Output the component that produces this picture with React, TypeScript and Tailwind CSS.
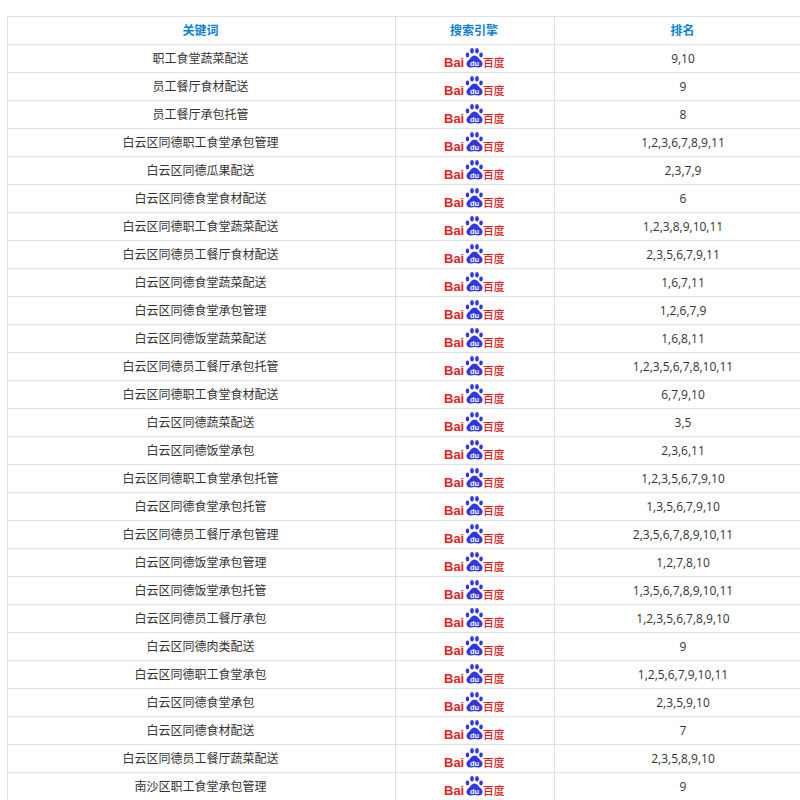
import React from 'react';

const rows: [string, string][] = [
  ['职工食堂蔬菜配送', '9,10'],
  ['员工餐厅食材配送', '9'],
  ['员工餐厅承包托管', '8'],
  ['白云区同德职工食堂承包管理', '1,2,3,6,7,8,9,11'],
  ['白云区同德瓜果配送', '2,3,7,9'],
  ['白云区同德食堂食材配送', '6'],
  ['白云区同德职工食堂蔬菜配送', '1,2,3,8,9,10,11'],
  ['白云区同德员工餐厅食材配送', '2,3,5,6,7,9,11'],
  ['白云区同德食堂蔬菜配送', '1,6,7,11'],
  ['白云区同德食堂承包管理', '1,2,6,7,9'],
  ['白云区同德饭堂蔬菜配送', '1,6,8,11'],
  ['白云区同德员工餐厅承包托管', '1,2,3,5,6,7,8,10,11'],
  ['白云区同德职工食堂食材配送', '6,7,9,10'],
  ['白云区同德蔬菜配送', '3,5'],
  ['白云区同德饭堂承包', '2,3,6,11'],
  ['白云区同德职工食堂承包托管', '1,2,3,5,6,7,9,10'],
  ['白云区同德食堂承包托管', '1,3,5,6,7,9,10'],
  ['白云区同德员工餐厅承包管理', '2,3,5,6,7,8,9,10,11'],
  ['白云区同德饭堂承包管理', '1,2,7,8,10'],
  ['白云区同德饭堂承包托管', '1,3,5,6,7,8,9,10,11'],
  ['白云区同德员工餐厅承包', '1,2,3,5,6,7,8,9,10'],
  ['白云区同德肉类配送', '9'],
  ['白云区同德职工食堂承包', '1,2,5,6,7,9,10,11'],
  ['白云区同德食堂承包', '2,3,5,9,10'],
  ['白云区同德食材配送', '7'],
  ['白云区同德员工餐厅蔬菜配送', '2,3,5,8,9,10'],
  ['南沙区职工食堂承包管理', '9'],
];

const BaiduLogo = () => (
  <svg width="62" height="24" viewBox="0 0 62 24" className="block mx-auto">
    <text x="0" y="20" fontSize="13" fontWeight="700" fill="#e8211c" fontFamily="'Liberation Sans', sans-serif">Bai</text>
    <g fill="#2f38e4">
      <ellipse cx="23.500" cy="8" rx="1.800" ry="2.400" />
      <ellipse cx="28" cy="3.800" rx="1.900" ry="2.700" />
      <ellipse cx="33" cy="3.800" rx="1.900" ry="2.700" />
      <ellipse cx="37" cy="8" rx="1.800" ry="2.400" />
      <path d="M30.500 8.500c-2.600 0-3.600 2.400-5 3.700-1.500 1.300-3.500 2.800-3 5.200.4 2.100 2.100 3.100 4 3 1.500-.1 2.800-.5 4-.5s2.500.4 4 .5c1.900.1 3.600-.9 4-3 .5-2.400-1.500-3.900-3-5.200-1.400-1.300-2.400-3.700-5-3.700z" />
    </g>
    <text x="30.500" y="18.500" textAnchor="middle" fontSize="7.500" fontWeight="700" fill="#fff" fontFamily="'Liberation Sans', sans-serif">du</text>
    <text x="39" y="20" fontSize="11" fontWeight="500" fill="#e8211c" fontFamily="'Noto Sans CJK SC', sans-serif" textLength="21.500" lengthAdjust="spacingAndGlyphs">百度</text>
  </svg>
);

export default function App() {
  return (
    <div className="h-[800px] w-[800px] overflow-hidden bg-white pl-[7px] pt-4 font-['Open_Sans','Noto_Sans_CJK_SC',sans-serif] text-xs text-[#333]">
      <table className="w-[805px] table-fixed border-collapse">
        <colgroup>
          <col className="w-[388px]" />
          <col className="w-[159px]" />
          <col className="w-[258px]" />
        </colgroup>
        <thead>
          <tr className="h-7 text-[#0a82d2]">
            <th className="border border-[#e0e0e0] p-0 pr-0.5 font-bold">关键词</th>
            <th className="border border-[#e0e0e0] p-0 pr-0.5 font-bold">搜索引擎</th>
            <th className="border border-[#e0e0e0] p-0 pr-0.5 font-bold">排名</th>
          </tr>
        </thead>
        <tbody>
          {rows.map(([keyword, rank]) => (
            <tr key={keyword} className="h-7">
              <td className="border border-[#e0e0e0] p-0 pr-0.5 text-center">{keyword}</td>
              <td className="border border-[#e0e0e0] p-0">
                <BaiduLogo />
              </td>
              <td className="border border-[#e0e0e0] p-0 pr-px text-center">{rank}</td>
            </tr>
          ))}
        </tbody>
      </table>
    </div>
  );
}
